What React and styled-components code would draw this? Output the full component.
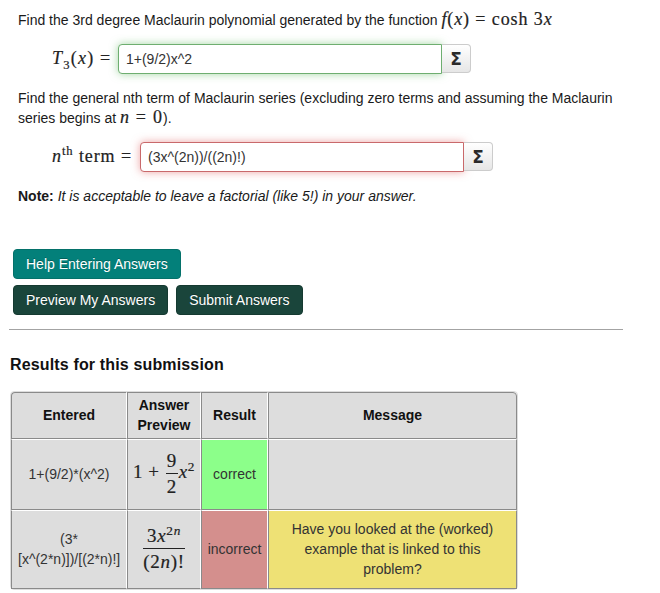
import React from 'react'
import styled, { createGlobalStyle } from 'styled-components'

const Global = createGlobalStyle`
  html, body {
    margin: 0;
    padding: 0;
    background: #fff;
    color: #1a1a1a;
    font-family: "Liberation Sans", Arial, sans-serif;
    font-size: 14px;
    line-height: 20px;
  }
`

function App() {
  return (
    <Page>
      <Global />
      <Problem>
        <Text>
          Find the 3rd degree Maclaurin polynomial generated by the function{' '}
          <Math $size="18px" $track="0.9px"><i>f</i>(<i>x</i>) = <b>cosh</b> 3<i>x</i></Math>
        </Text>
        <AnswerRow $indent="34px" $top="14px">
          <Label $width="66px">
            <Math $size="18px" $track="1.2px"><i>T</i><sub>3</sub>(<i>x</i>) =</Math>
          </Label>
          <AnswerInput $state="correct" defaultValue="1+(9/2)x^2" />
          <SigmaButton type="button">Σ</SigmaButton>
        </AnswerRow>
        <Text $top="14px">
          Find the general nth term of Maclaurin series (excluding zero terms and assuming the Maclaurin
          <br />
          series begins at <Math $size="18px" $track="1.2px"><i>n</i> = 0</Math>).
        </Text>
        <AnswerRow $indent="34px" $top="14px">
          <Label $width="88px">
            <Math $size="18px" $track="0.9px"><i>n</i><sup>th</sup> <b>term</b> =</Math>
          </Label>
          <AnswerInput $state="incorrect" defaultValue="(3x^(2n))/((2n)!)" />
          <SigmaButton type="button">Σ</SigmaButton>
        </AnswerRow>
        <Text $top="14px">
          <strong>Note:</strong> <em>It is acceptable to leave a factorial (like 5!) in your answer.</em>
        </Text>
      </Problem>

      <Buttons>
        <ButtonRow>
          <ActionButton type="button" $teal>Help Entering Answers</ActionButton>
        </ButtonRow>
        <ButtonRow>
          <ActionButton type="button">Preview My Answers</ActionButton>
          <ActionButton type="button">Submit Answers</ActionButton>
        </ButtonRow>
      </Buttons>

      <Rule />
      <Heading>Results for this submission</Heading>

      <Results>
        <colgroup>
          <col style={{ width: 116 }} />
          <col style={{ width: 74 }} />
          <col style={{ width: 67 }} />
          <col />
        </colgroup>
        <tbody>
          <tr>
            <Head>Entered</Head>
            <Head>Answer<br />Preview</Head>
            <Head>Result</Head>
            <Head>Message</Head>
          </tr>
          <tr style={{ height: 71 }}>
            <Cell>1+(9/2)*(x^2)</Cell>
            <Cell $flush>
              <Math $size="19px" $track="0.5px">
                1 + <Fraction><span>9</span><span>2</span></Fraction><i>x</i><sup>2</sup>
              </Math>
            </Cell>
            <Cell $bg="#8cff8a">correct</Cell>
            <Cell />
          </tr>
          <tr style={{ height: 79 }}>
            <Cell>(3*<br />[x^(2*n)])/[(2*n)!]</Cell>
            <Cell $flush>
              <Math $size="19px" $track="0.7px">
                <Fraction $wide>
                  <span>3<i>x</i><sup>2<i>n</i></sup></span>
                  <span>(2<i>n</i>)!</span>
                </Fraction>
              </Math>
            </Cell>
            <Cell $bg="#d48f8d" $flush>incorrect</Cell>
            <Cell $bg="#eee175">Have you looked at the (worked) example that is linked to this problem?</Cell>
          </tr>
        </tbody>
      </Results>
    </Page>
  )
}

export default App

const Page = styled.div`
  width: 660px;
  height: 593px;
  box-sizing: border-box;
  padding: 10px 0 0 9px;
  overflow: hidden;
`

const Problem = styled.div`
  padding-left: 9px;
  width: 600px;
`

const Text = styled.div`
  margin-top: ${(p) => p.$top || '0'};
  color: #1a1a1a;
`

const Math = styled.span`
  font-family: "Liberation Serif", "DejaVu Serif", serif;
  font-size: ${(p) => p.$size};
  letter-spacing: ${(p) => p.$track || '0'};
  line-height: 1;
  color: #222;
  white-space: nowrap;
  -webkit-text-stroke: 0.2px #222;

  b {
    font-weight: 400;
  }

  sub, sup {
    font-size: 0.7em;
    line-height: 0;
  }
`

const Label = styled.span`
  flex: none;
  width: ${(p) => p.$width};
`

const AnswerRow = styled.div`
  display: flex;
  align-items: center;
  margin-top: ${(p) => p.$top};
  padding-left: ${(p) => p.$indent};
  height: 30px;
`

const AnswerInput = styled.input`
  width: 324px;
  height: 30px;
  box-sizing: border-box;
  padding: 0 7px;
  font: 14px "Liberation Sans", Arial, sans-serif;
  color: #333;
  background: #fff;
  outline: none;
  border-radius: 4px 0 0 4px;
  border: 1px solid ${(p) => (p.$state === 'correct' ? '#6eae70' : '#c9696b')};
  box-shadow: 0 0 8px ${(p) => (p.$state === 'correct' ? 'rgba(90,180,90,0.55)' : 'rgba(220,90,90,0.55)')};
`

const SigmaButton = styled.button`
  width: 29px;
  height: 29px;
  margin: 0 0 1px;
  padding: 0;
  border: 1px solid #ccc;
  border-left: none;
  border-radius: 0 4px 4px 0;
  background: linear-gradient(#fff, #e6e6e6);
  color: #2a2a2a;
  font: bold 17px "DejaVu Sans", sans-serif;
`

const Buttons = styled.div`
  display: flex;
  flex-direction: column;
  gap: 6px;
  margin: 43px 0 0 4px;
`

const ButtonRow = styled.div`
  display: flex;
  gap: 8px;
`

const ActionButton = styled.button`
  height: 30px;
  padding: 0 12px;
  border: 1px solid ${(p) => (p.$teal ? '#04716a' : '#153a31')};
  border-radius: 4px;
  background: ${(p) => (p.$teal ? '#03807a' : '#1a453b')};
  color: #fff;
  font: 14px "Liberation Sans", Arial, sans-serif;
  text-shadow: 0 -1px 0 rgba(0, 0, 0, 0.25);
`

const Rule = styled.hr`
  width: 614px;
  height: 1px;
  margin: 14px 0 0;
  border: none;
  background: #a3a3a3;
`

const Heading = styled.h2`
  margin: 25px 0 0 1px;
  font-size: 16px;
  line-height: 20px;
  font-weight: bold;
  letter-spacing: 0.15px;
  color: #111;
`

const Results = styled.table`
  margin: 16px 0 0 1px;
  width: 508px;
  table-layout: fixed;
  border-collapse: separate;
  border-spacing: 0;
  border: 1px solid #ddd;
  border-radius: 4px;
  background: #fff;
`

const Head = styled.th`
  height: 47px;
  padding: 0 0 2px;
  box-sizing: border-box;
  background: #ddd;
  text-align: center;
  font-size: 14px;
  font-weight: bold;
  color: #111;
  border-left: 1px solid #8a8a8a;
  border-top: 1px solid #8a8a8a;
  border-right: 1px solid #fff;
  border-bottom: 1px solid #8a8a8a;
  &:first-child { border-top-left-radius: 4px; }
  &:last-child { border-top-right-radius: 4px; border-right: 1px solid #8a8a8a; }
`

const Cell = styled.td`
  padding: 0 ${(p) => (p.$flush ? '0' : '6px')} 2px;
  background: ${(p) => p.$bg || '#ddd'};
  text-align: center;
  font-size: 14px;
  color: #333;
  border-left: 1px solid #8a8a8a;
  border-top: 1px solid #fff;
  border-right: 1px solid #fff;
  border-bottom: 1px solid #8a8a8a;
  &:last-child { border-right: 1px solid #8a8a8a; }
`

const Fraction = styled.span`
  display: inline-flex;
  flex-direction: column;
  vertical-align: middle;
  line-height: 25px;
  margin: 0 1px;

  span:first-child {
    border-bottom: 1px solid #222;
    padding: 0 ${(p) => (p.$wide ? '3px' : '1px')};
  }
`
